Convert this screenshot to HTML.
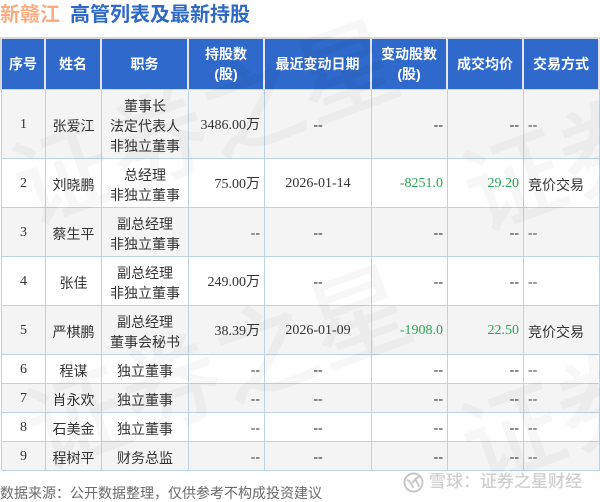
<!DOCTYPE html>
<html lang="zh">
<head>
<meta charset="utf-8">
<style>
html,body{margin:0;padding:0;background:#fff}
body{width:600px;height:501px;position:relative;overflow:hidden;font-family:"Liberation Sans","Noto Sans CJK SC",sans-serif;color:#333}
.title{position:absolute;left:0;top:2px;height:27px;line-height:27px;font-size:20px;font-weight:700;white-space:nowrap}
.title b{color:#f9ab7f;font-weight:700}
.title i{font-style:normal;color:#2e69c6;position:absolute;left:70px;top:0}
.frame{position:absolute;left:0;top:37px;width:600px;height:53px;background:#d8d8d8}
table{position:absolute;left:1px;top:39px;border-collapse:separate;border-spacing:0;table-layout:fixed;width:599px;font-size:14px}
th{background:#2e69cb;color:#fff;font-weight:700;font-size:14px;line-height:20px;height:51px;padding:0;border-right:2px solid #e4e6e8;border-left:0;box-sizing:border-box;text-align:center;border-bottom:1px solid #d8d8d8}
th:first-child{border-left:1px solid #d8d8d8}
td{padding:3px 0 0;box-sizing:border-box;border-right:1px solid #bcd3e6;border-bottom:1px solid #bcd3e6;text-align:center;line-height:20px;vertical-align:middle;font-family:"Liberation Sans","Noto Sans CJK SC",sans-serif}
td:first-child{border-left:1px solid #bcd3e6;font-family:"Liberation Serif",serif;padding:1px 0 0;font-size:14px}
tr.g td{background:#f4f4f4}
td.n{font-family:"Liberation Serif","Noto Sans CJK SC",serif;text-align:right;padding-right:4px}
td.d{font-family:"Liberation Serif",serif;padding:1px 0 0}
td.k{color:#222;font-family:"Liberation Serif",serif;text-align:right;padding-right:4px}
td.c{color:#222;font-family:"Liberation Serif",serif}
td.l{text-align:left;padding-left:4px}
td.s{font-family:"Liberation Serif",serif;color:#444}
td.gr{color:#27a654;padding-top:1px}
.wm{position:absolute;left:0;top:0;width:600px;height:501px;pointer-events:none;overflow:hidden}
.wm span{position:absolute;font-family:"Noto Sans CJK SC",sans-serif;font-size:100px;line-height:100px;font-weight:500;color:rgba(0,0,0,.03);white-space:nowrap;transform:rotate(-20deg);transform-origin:0 50%}
.foot{position:absolute;left:0;top:484px;font-size:14px;line-height:18px;color:#6a6a6a;white-space:nowrap}
.xq{position:absolute;left:429px;top:472px;font-size:17px;line-height:20px;color:#cfcfcf;font-weight:500;white-space:nowrap}
.logo{position:absolute;left:403px;top:472px}
</style>
</head>
<body>
<div class="title"><b>新赣江</b><i>高管列表及最新持股</i></div>
<div class="frame"></div>
<table>
<colgroup><col style="width:45px"><col style="width:56px"><col style="width:87px"><col style="width:76px"><col style="width:107px"><col style="width:76px"><col style="width:76px"><col style="width:76px"></colgroup>
<tr><th>序号</th><th>姓名</th><th>职务</th><th>持股数<br>(股)</th><th>最近变动日期</th><th>变动股数<br>(股)</th><th>成交均价</th><th>交易方式</th></tr>
<tr class="g" style="height:69px"><td>1</td><td>张爱江</td><td>董事长<br>法定代表人<br>非独立董事</td><td class="n">3486.00万</td><td class="c">--</td><td class="k">--</td><td class="k">--</td><td class="l s">--</td></tr>
<tr style="height:49px"><td>2</td><td>刘晓鹏</td><td>总经理<br>非独立董事</td><td class="n">75.00万</td><td class="d">2026-01-14</td><td class="n gr">-8251.0</td><td class="n gr">29.20</td><td class="l">竞价交易</td></tr>
<tr class="g" style="height:49px"><td>3</td><td>蔡生平</td><td>副总经理<br>非独立董事</td><td class="n">--</td><td class="c">--</td><td class="k">--</td><td class="k">--</td><td class="l s">--</td></tr>
<tr style="height:49px"><td>4</td><td>张佳</td><td>副总经理<br>非独立董事</td><td class="n">249.00万</td><td class="c">--</td><td class="k">--</td><td class="k">--</td><td class="l s">--</td></tr>
<tr class="g" style="height:49px"><td>5</td><td>严棋鹏</td><td>副总经理<br>董事会秘书</td><td class="n">38.39万</td><td class="d">2026-01-09</td><td class="n gr">-1908.0</td><td class="n gr">22.50</td><td class="l">竞价交易</td></tr>
<tr style="height:29px"><td>6</td><td>程谋</td><td>独立董事</td><td class="n">--</td><td class="c">--</td><td class="k">--</td><td class="k">--</td><td class="l s">--</td></tr>
<tr class="g" style="height:29px"><td>7</td><td>肖永欢</td><td>独立董事</td><td class="n">--</td><td class="c">--</td><td class="k">--</td><td class="k">--</td><td class="l s">--</td></tr>
<tr style="height:29px"><td>8</td><td>石美金</td><td>独立董事</td><td class="n">--</td><td class="c">--</td><td class="k">--</td><td class="k">--</td><td class="l s">--</td></tr>
<tr class="g" style="height:29px"><td>9</td><td>程树平</td><td>财务总监</td><td class="n">--</td><td class="c">--</td><td class="k">--</td><td class="k">--</td><td class="l s">--</td></tr>
</table>
<div class="wm">
<span style="left:15px;top:135px">证券之星</span>
<span style="left:465px;top:142px">证券之星</span>
<span style="left:28px;top:380px">证券之星</span>
<span style="left:463px;top:395px">证券之星</span>
</div>
<div class="foot">数据来源：公开数据整理，仅供参考不构成投资建议</div>
<svg class="logo" width="21" height="21" viewBox="0 0 21 21" fill="none" stroke="#c8c8c8" stroke-width="2"><circle cx="10.5" cy="10.5" r="9"/><path d="M4 8c3 1 5 4 6 8M10 11c1-3 3-5 6-6M11 7c2 1 4 4 5 8"/></svg>
<div class="xq">雪球：证券之星财经</div>
</body>
</html>
